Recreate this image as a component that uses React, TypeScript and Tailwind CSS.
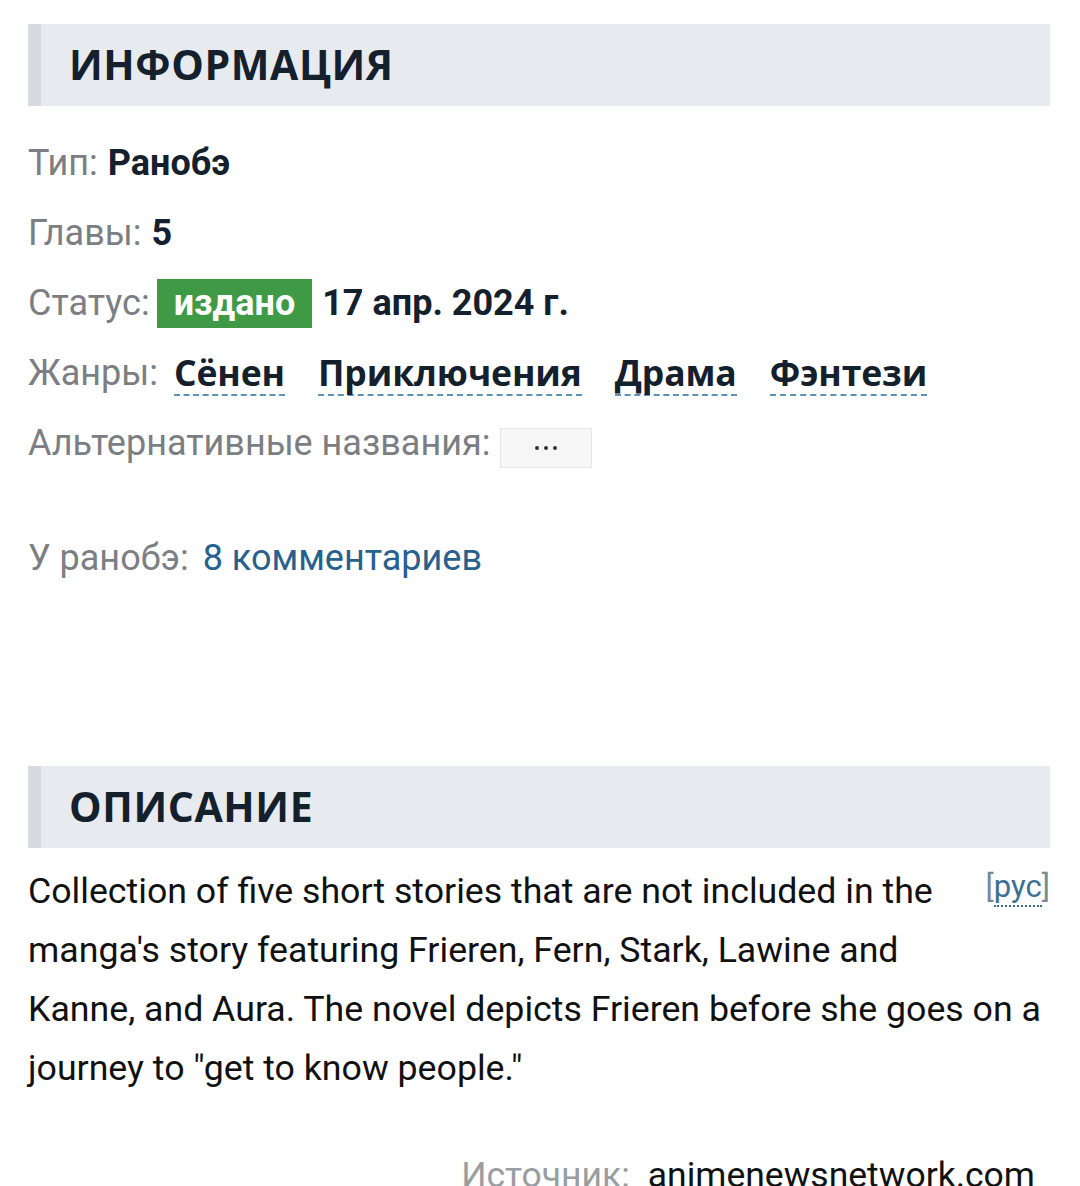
import { useState } from "react"

const genres = ["Сёнен", "Приключения", "Драма", "Фэнтези"]

function SectionTitle({ children }: { children: string }) {
  return (
    <div className="flex h-[82px] items-center border-l-[13px] border-[#d6dbe2] bg-[#e7ebf0] pl-[28px]">
      <h2 className="font-['Open_Sans',sans-serif] text-[41px] font-bold uppercase tracking-[0.6px] text-[#15202d]">
        {children}
      </h2>
    </div>
  )
}

function Row({ label, children }: { label: string; children: React.ReactNode }) {
  return (
    <div className="flex h-[70px] items-center">
      <span className="mr-[10px] text-[#7b7e82]">{label}</span>
      {children}
    </div>
  )
}

export default function App() {
  const [showAlt, setShowAlt] = useState(false)

  return (
    <div className="h-[1186px] overflow-hidden bg-white pl-[28px] pr-[30px] pt-[24px] font-['Roboto',sans-serif] text-[36px]">
      <SectionTitle>Информация</SectionTitle>

      <div className="mt-[22px]">
        <Row label="Тип:">
          <b className="font-bold text-[#15202d]">Ранобэ</b>
        </Row>
        <Row label="Главы:">
          <b className="font-bold text-[#15202d]">5</b>
        </Row>
        <Row label="Статус:">
          <span className="-ml-[3px] flex h-[49px] items-center bg-[#3f9a46] px-[17px] font-bold text-white">издано</span>
          <b className="ml-[10px] font-bold text-[#15202d]">17 апр. 2024 г.</b>
        </Row>
        <Row label="Жанры:">
          <div className="ml-[6px] flex gap-[33px]">
            {genres.map((g) => (
              <a
                key={g}
                href="#"
                className="border-b-2 border-dashed border-[#5c93b4] pb-[1px] font-['Open_Sans',sans-serif] text-[35.5px] font-bold leading-[42px] tracking-[-0.1px] text-[#15202d]"
              >
                {g}
              </a>
            ))}
          </div>
        </Row>
        <Row label="Альтернативные названия:">
          <button
            onClick={() => setShowAlt(!showAlt)}
            className="mt-[10px] flex h-[40px] w-[92px] items-center justify-center gap-[5px] border border-[#e6e6e6] bg-[#f6f6f6]"
          >
            <i className="h-[4px] w-[4px] rounded-full bg-[#333]" />
            <i className="h-[4px] w-[4px] rounded-full bg-[#333]" />
            <i className="h-[4px] w-[4px] rounded-full bg-[#333]" />
          </button>
        </Row>
      </div>

      <div className="mt-[45px] flex h-[70px] items-center">
        <span className="mr-[14px] text-[#7b7e82]">У ранобэ:</span>
        <a href="#" className="text-[#27618d]">8 комментариев</a>
      </div>

      <div className="mt-[173px]">
        <SectionTitle>Описание</SectionTitle>
      </div>

      <div className="mt-[14px] text-[35.7px] leading-[59px] text-[#111]">
        <span className="float-right ml-[20px] h-[80px] text-[31px] leading-[50px] text-[#7d8895]">
          [<a href="#" className="border-b-2 border-dotted border-[#3d6f95] text-[#3d6f95]">рус</a>]
        </span>
        Collection of five short stories that are not included in the manga's story featuring Frieren, Fern, Stark,
        Lawine and Kanne, and Aura. The novel depicts Frieren before she goes on a journey to "get to know people."
      </div>

      <div className="mt-[48px] pr-[15px] text-right text-[35.5px] leading-[59px]">
        <span className="mr-[18px] text-[#9a9da1]">Источник:</span>
        <a href="#" className="text-[#111]">animenewsnetwork.com</a>
      </div>
    </div>
  )
}
